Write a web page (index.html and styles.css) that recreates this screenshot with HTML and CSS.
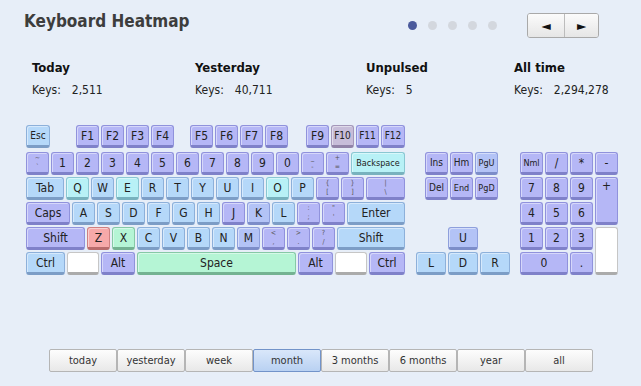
FILE: index.html
```html
<!DOCTYPE html>
<html lang="en">
<head>
	<meta charset="UTF-8">
	<title>Keyboard Heatmap</title>
	<link rel="stylesheet" href="styles.css">
</head>
<body>
	<div class="header">
		<h1 class="title">Keyboard Heatmap</h1>
		<div class="pager">
			<span class="dot on"></span>
			<span class="dot"></span>
			<span class="dot"></span>
			<span class="dot"></span>
			<span class="dot"></span>
		</div>
		<div class="nav">
			<button class="nav-btn">&#9668;</button>
			<button class="nav-btn">&#9658;</button>
		</div>
	</div>

	<div class="stats">
		<div class="stat">
			<div class="stat-label">Today</div>
			<div class="stat-keys">Keys:<span>2,511</span></div>
		</div>
		<div class="stat">
			<div class="stat-label">Yesterday</div>
			<div class="stat-keys">Keys:<span>40,711</span></div>
		</div>
		<div class="stat">
			<div class="stat-label">Unpulsed</div>
			<div class="stat-keys">Keys:<span>5</span></div>
		</div>
		<div class="stat">
			<div class="stat-label">All time</div>
			<div class="stat-keys">Keys:<span>2,294,278</span></div>
		</div>
	</div>

	<div class="keyboard">
		<div class="main">
			<div class="row fn">
				<div class="key b w-esc sm">Esc</div>
				<div class="key p gap-a">F1</div>
				<div class="key p">F2</div>
				<div class="key p">F3</div>
				<div class="key p">F4</div>
				<div class="key p gap-b">F5</div>
				<div class="key p">F6</div>
				<div class="key p">F7</div>
				<div class="key p">F8</div>
				<div class="key p gap-c">F9</div>
				<div class="key m sm">F10</div>
				<div class="key p sm">F11</div>
				<div class="key p sm w-f12">F12</div>
			</div>
			<div class="row">
				<div class="key p dual"><i>~</i><i>`</i></div>
				<div class="key p">1</div>
				<div class="key p">2</div>
				<div class="key p">3</div>
				<div class="key p">4</div>
				<div class="key p">5</div>
				<div class="key p">6</div>
				<div class="key p">7</div>
				<div class="key p">8</div>
				<div class="key p">9</div>
				<div class="key p">0</div>
				<div class="key p dual"><i>_</i><i>-</i></div>
				<div class="key p dual"><i>+</i><i>=</i></div>
				<div class="key c w-bs xs">Backspace</div>
			</div>
			<div class="row">
				<div class="key b w-tab">Tab</div>
				<div class="key c">Q</div>
				<div class="key b">W</div>
				<div class="key c">E</div>
				<div class="key b">R</div>
				<div class="key b">T</div>
				<div class="key b">Y</div>
				<div class="key b">U</div>
				<div class="key b">I</div>
				<div class="key c">O</div>
				<div class="key b">P</div>
				<div class="key p dual"><i>{</i><i>[</i></div>
				<div class="key p dual"><i>}</i><i>]</i></div>
				<div class="key p w-bsl dual"><i>|</i><i>\</i></div>
			</div>
			<div class="row">
				<div class="key p w-caps">Caps</div>
				<div class="key b">A</div>
				<div class="key b">S</div>
				<div class="key b">D</div>
				<div class="key b">F</div>
				<div class="key b">G</div>
				<div class="key b">H</div>
				<div class="key p">J</div>
				<div class="key u">K</div>
				<div class="key b">L</div>
				<div class="key p dual"><i>:</i><i>;</i></div>
				<div class="key p dual"><i>"</i><i>'</i></div>
				<div class="key b w-enter">Enter</div>
			</div>
			<div class="row">
				<div class="key p w-lshift">Shift</div>
				<div class="key r">Z</div>
				<div class="key g">X</div>
				<div class="key b">C</div>
				<div class="key b">V</div>
				<div class="key b">B</div>
				<div class="key b">N</div>
				<div class="key u">M</div>
				<div class="key p dual"><i>&lt;</i><i>,</i></div>
				<div class="key p dual"><i>&gt;</i><i>.</i></div>
				<div class="key p dual"><i>?</i><i>/</i></div>
				<div class="key b w-rshift">Shift</div>
			</div>
			<div class="row">
				<div class="key b w-ctrl">Ctrl</div>
				<div class="key w w-win"></div>
				<div class="key p w-alt">Alt</div>
				<div class="key g w-space">Space</div>
				<div class="key p w-ralt">Alt</div>
				<div class="key w w-win"></div>
				<div class="key p w-rctrl">Ctrl</div>
			</div>
		</div>

		<div class="navkeys">
			<div class="row pad-edit">
				<div class="key p sm">Ins</div>
				<div class="key p sm">Hm</div>
				<div class="key u xs">PgU</div>
			</div>
			<div class="row pad-edit">
				<div class="key p sm">Del</div>
				<div class="key p xs">End</div>
				<div class="key p xs">PgD</div>
			</div>
			<div class="row spacer"></div>
			<div class="row pad-up">
				<div class="key u w-arrow">U</div>
			</div>
			<div class="row">
				<div class="key b w-arrow">L</div>
				<div class="key b w-arrow">D</div>
				<div class="key b w-arrow">R</div>
			</div>
		</div>

		<div class="numpad">
			<div class="key p xs">Nml</div>
			<div class="key p">/</div>
			<div class="key p">*</div>
			<div class="key p">-</div>
			<div class="key p">7</div>
			<div class="key p">8</div>
			<div class="key p">9</div>
			<div class="key p tall top">+</div>
			<div class="key p">4</div>
			<div class="key p">5</div>
			<div class="key p">6</div>
			<div class="key p">1</div>
			<div class="key p">2</div>
			<div class="key p">3</div>
			<div class="key w tall"></div>
			<div class="key p wide">0</div>
			<div class="key p">.</div>
		</div>
	</div>

	<div class="ranges">
		<button class="range">today</button>
		<button class="range">yesterday</button>
		<button class="range">week</button>
		<button class="range active">month</button>
		<button class="range">3 months</button>
		<button class="range">6 months</button>
		<button class="range">year</button>
		<button class="range">all</button>
	</div>
</body>
</html>
```

FILE: styles.css
```css
* { margin: 0; padding: 0; box-sizing: border-box; }
body {
	width: 641px;
	height: 386px;
	overflow: hidden;
	background-color: #e7eef8;
	font-family: "DejaVu Sans Condensed", "DejaVu Sans", sans-serif;
	color: #222;
}

/* header */
.header {
	display: flex;
	align-items: flex-start;
	height: 52px;
	padding: 11px 42px 0 24px;
}
.title {
	flex: 1;
	font-size: 17px;
	line-height: 20px;
	font-weight: bold;
	color: #3d3d3d;
}
.pager {
	display: flex;
	gap: 11px;
	margin: 10px 30px 0 0;
}
.dot {
	width: 9px;
	height: 9px;
	border-radius: 50%;
	background-color: #d3d7de;
}
.dot.on { background-color: #4b5a9c; }
.nav {
	display: flex;
	margin-top: 2px;
	border: 1px solid #a9a9a9;
	border-radius: 3px;
	overflow: hidden;
}
.nav-btn {
	width: 36px;
	height: 23px;
	border: none;
	background: linear-gradient(#fbfbfb, #e6e6e6);
	font-size: 12px;
	color: #111;
	font-family: "DejaVu Sans", sans-serif;
}
.nav-btn + .nav-btn { border-left: 1px solid #bcbcbc; width: 34px; }

/* stats */
.stats {
	display: grid;
	grid-template-columns: 163px 171px 148px auto;
	padding: 8px 0 0 32px;
}
.stat-label {
	font-size: 13px;
	line-height: 16px;
	font-weight: bold;
	color: #111;
}
.stat-keys {
	margin-top: 6px;
	font-size: 12px;
	line-height: 16px;
}
.stat-keys span { margin-left: 11px; }

/* keyboard */
.keyboard {
	display: flex;
	align-items: flex-start;
	margin: 27px 0 0 26px;
}
.main {
	display: flex;
	flex-direction: column;
	gap: 2px;
	width: 379px;
}
.row {
	display: flex;
	gap: 2px;
}
.row.fn { margin-bottom: 2px; }

.key {
	width: 23px;
	height: 23px;
	flex: none;
	display: flex;
	align-items: center;
	justify-content: center;
	border: 1px solid;
	border-bottom-width: 3px;
	border-radius: 3px;
	font-size: 12px;
	color: #222;
	box-shadow: inset 1px 1px 0 rgba(255, 255, 255, 0.45);
}
.key.sm { font-size: 10px; }
.key.xs { font-size: 9px; }
.key.dual {
	flex-direction: column;
	font-size: 7px;
	line-height: 9px;
	color: #555;
}
.key.dual i { font-style: normal; }

/* heat colours */
.p { background-color: #b5b7f6; border-color: #9092dc; border-bottom-color: #7f81c9; }
.u { background-color: #b3c3f6; border-color: #8e9fdc; border-bottom-color: #7c8dc9; }
.b { background-color: #b5d8f9; border-color: #8db0da; border-bottom-color: #7c9dc6; }
.c { background-color: #b8f1f6; border-color: #8ac7d2; border-bottom-color: #78b2be; }
.g { background-color: #b5f5d5; border-color: #86c9a6; border-bottom-color: #74b292; }
.r { background-color: #f6a9a9; border-color: #cf8080; border-bottom-color: #b96c6c; }
.m { background-color: #c7bdd9; border-color: #a497ba; border-bottom-color: #9183a8; }
.w { background-color: #fff; border-color: #c6c6c6; border-bottom-color: #ababab; }

/* widths */
.w-esc { width: 24px; }
.w-f12 { width: 24px; }
.gap-a { margin-left: 24px; }
.gap-b { margin-left: 14px; }
.gap-c { margin-left: 16px; }
.w-bs { width: 54px; }
.w-tab { width: 38px; }
.w-bsl { width: 39px; }
.w-caps { width: 44px; }
.w-enter { width: 58px; }
.w-lshift { width: 59px; }
.w-rshift { width: 68px; }
.w-ctrl { width: 39px; }
.w-win { width: 32px; }
.w-alt { width: 34px; }
.w-space { width: 159px; }
.w-ralt { width: 35px; }
.w-rctrl { width: 36px; }
.w-arrow { width: 30px; }

.navkeys {
	display: flex;
	flex-direction: column;
	gap: 2px;
	width: 94px;
	margin: 27px 0 0 11px;
}
.pad-edit { padding-left: 9px; }
.pad-up { padding-left: 32px; }
.spacer { height: 23px; }

.numpad {
	display: grid;
	grid-template-columns: repeat(4, 23px);
	grid-auto-rows: 23px;
	gap: 2px;
	margin: 27px 0 0 10px;
}
.numpad .tall { grid-column: 4; grid-row: span 2; height: auto; }
.numpad .tall.top { align-items: flex-start; padding-top: 1px; }
.numpad .wide { grid-column: span 2; width: auto; }

/* ranges */
.ranges {
	display: flex;
	margin: 74px 0 0 49px;
}
.range {
	width: 68px;
	height: 23px;
	border: 1px solid #b5b5b5;
	border-radius: 2px;
	background: linear-gradient(#fdfdfd, #e8e8e8);
	font-family: "DejaVu Sans Condensed", "DejaVu Sans", sans-serif;
	font-size: 11px;
	color: #333;
}
.range.active {
	background: linear-gradient(#d9e7fa, #b9d1f2);
	border-color: #7293c9;
}
```
